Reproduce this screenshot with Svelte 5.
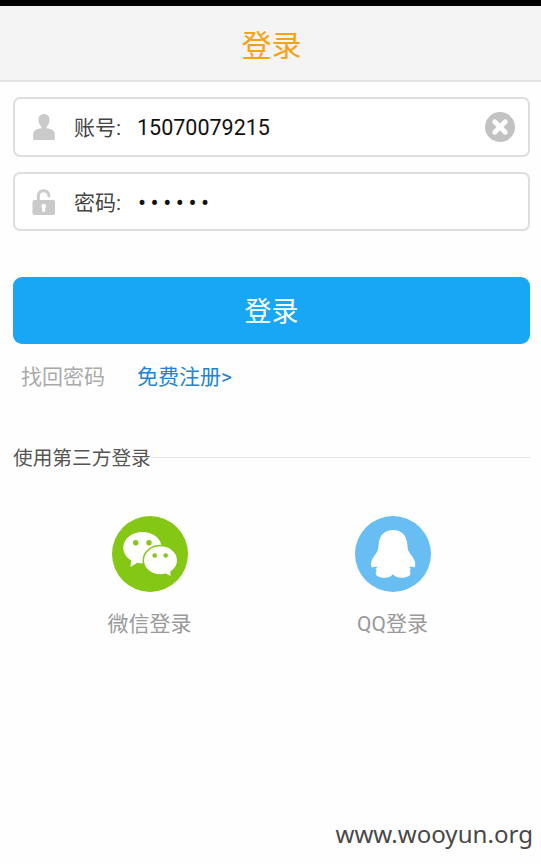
<script lang="ts">
	let account = '15070079215';
	let password = '123456';
</script>

<svelte:head><title>登录</title></svelte:head>

<div class="page">
	<header>
		<h1>登录</h1>
	</header>

	<form on:submit|preventDefault>
		<label class="field">
			<svg class="field-icon" viewBox="0 0 24 28" aria-hidden="true">
				<path d="M12 1c3.300 0 5.500 2.300 5.500 5.800 0 3-1.200 5.400-3 7v1.400c3.500.3 7.500 1.300 8.300 5.300V26a1 1 0 0 1-1 1H2.200a1 1 0 0 1-1-1v-5.500c.8-4 4.800-5 8.300-5.300v-1.400c-1.800-1.600-3-4-3-7C6.500 3.300 8.700 1 12 1z" />
			</svg>
			<span class="name">账号:</span>
			<input type="text" bind:value={account} />
			<button class="clear" type="button" aria-label="清除" on:click={() => (account = '')}>
				<svg viewBox="0 0 30 30">
					<circle cx="15" cy="15" r="15" />
					<path d="M9.700 9.700l10.600 10.600M20.300 9.700l-10.600 10.600" />
				</svg>
			</button>
		</label>

		<label class="field second">
			<svg class="field-icon" viewBox="0 0 24 28" aria-hidden="true">
				<path class="shackle" d="M6.300 13V8C6.300 1 16.600 1 16.900 7.800" />
				<path fill-rule="evenodd" d="M2.200 12h19.100A1.700 1.700 0 0 1 23 13.700v11.600a1.700 1.700 0 0 1-1.700 1.700H2.200a1.700 1.700 0 0 1-1.700-1.700V13.700A1.700 1.700 0 0 1 2.200 12zM11.700 15.700a2.500 2.500 0 0 0-1.500 4.400v3.700h3v-3.700A2.500 2.500 0 0 0 11.700 15.700z" />
			</svg>
			<span class="name">密码:</span>
			<input class="secret" type="password" bind:value={password} />
		</label>

		<button class="submit" type="submit">登录</button>
	</form>

	<nav>
		<a class="forgot" href="#forgot">找回密码</a>
		<a class="register" href="#register">免费注册&gt;</a>
	</nav>

	<div class="divider">
		<span>使用第三方登录</span>
	</div>

	<div class="providers">
		<a href="#wechat">
			<svg viewBox="0 0 76 76" aria-hidden="true">
				<circle cx="38" cy="38" r="38" fill="#84c714" />
				<path fill="#fff" d="M30.500 16C41 16 49.700 22.800 49.700 31.700S41 47.300 30.500 47.300c-1.800 0-3.600-.2-5.200-.6L18.500 51l.6-6.700C14.400 41.500 11.300 37 11.300 31.700 11.300 22.800 20 16 30.500 16z" />
				<path fill="#fff" stroke="#84c714" stroke-width="1.500" d="M48.500 29.600c9.400 0 17.200 6.300 17.200 14.800 0 4.600-2.700 8.800-6.600 11.500l.3 5.300-5.600-2.900c-1.700.5-3.400.8-5.300.8-9.400 0-17.200-6.300-17.200-14.700s7.800-14.800 17.200-14.800z" />
				<g fill="#84c714">
					<circle cx="23.700" cy="26.700" r="2.700" />
					<circle cx="37" cy="26.700" r="2.700" />
					<circle cx="42.700" cy="39.500" r="2.300" />
					<circle cx="53.700" cy="39.500" r="2.300" />
				</g>
			</svg>
			<span>微信登录</span>
		</a>
		<a href="#qq">
			<svg viewBox="0 0 76 76" aria-hidden="true">
				<circle cx="38" cy="38" r="38" fill="#68bef2" />
				<path fill="#fff" d="M38 14c8.500 0 13.600 5.500 14.300 14 .2 2.500.4 5 1.200 7 1.500 3.500 6.800 7.500 6.800 13 0 1.700-.5 3.500-1.400 3.500-.8 0-1.600-.6-2.500-1.200 0 1.500-.6 3-1.700 4.400.5.800.8 1.600.8 2.600 0 2.800-4 4.500-9 4.500-3.700 0-6.600-1.300-8.500-3.600-1.900 2.300-4.700 3.600-8.400 3.600-5 0-8.800-1.700-8.800-4.500 0-1 .3-1.800.8-2.600-1.100-1.400-1.700-2.900-1.700-4.400-.9.600-1.700 1.200-2.500 1.200-.9 0-1.400-1.800-1.400-3.500 0-5.500 5-9.500 6.500-13 .8-2 1-4.500 1.200-7C24.400 19.500 29.500 14 38 14z" />
				<path class="wing-gap" d="M18.800 52.500l3-1.200M57.700 52.500l-3-1.200" />
			</svg>
			<span>QQ登录</span>
		</a>
	</div>

	<footer>www.wooyun.org</footer>
</div>

<style>
	:global(body) {
		background: #fefefe;
	}

	.page {
		box-sizing: border-box;
		height: 864px;
		border-top: 6px solid #000;
		display: flex;
		flex-direction: column;
		overflow: hidden;
		font-family: Roboto, 'Noto Sans CJK SC', sans-serif;
		font-size: 21px;
		line-height: 30px;
	}

	header {
		box-sizing: border-box;
		height: 76px;
		flex-shrink: 0;
		display: flex;
		align-items: center;
		justify-content: center;
		background: #f4f4f4;
		border-bottom: 2px solid #e2e2e2;
	}

	h1 {
		margin: 0;
		padding: 5px 0 0 2px;
		font-size: 30px;
		font-weight: 400;
		line-height: 40px;
		color: #f4a316;
	}

	form {
		display: flex;
		flex-direction: column;
		padding: 15px 11px 0 13px;
	}

	.field {
		box-sizing: border-box;
		height: 60px;
		display: flex;
		align-items: center;
		padding: 0 13px 0 17px;
		border: 2px solid #dedede;
		border-radius: 7px;
		background: #fff;
	}

	.field.second {
		height: 59px;
		margin-top: 15px;
	}

	.field-icon {
		width: 24px;
		height: 28px;
		flex-shrink: 0;
		fill: #cacaca;
	}

	.shackle {
		fill: none;
		stroke: #cacaca;
		stroke-width: 3;
		stroke-linecap: round;
	}

	.name {
		width: 63px;
		margin-left: 18px;
		padding-top: 2px;
		color: #444;
		white-space: nowrap;
	}

	input {
		flex: 1;
		min-width: 0;
		padding: 2px 0 0;
		border: 0;
		outline: 0;
		background: none;
		font: inherit;
		font-size: 21.500px;
		color: #111;
	}

	.secret {
		padding-left: 1px;
		font-size: 24px;
		letter-spacing: 4.500px;
	}

	.clear {
		width: 30px;
		height: 30px;
		padding: 0;
		border: 0;
		background: none;
	}

	.clear svg {
		display: block;
		fill: #c2c2c2;
	}

	.clear path {
		stroke: #fff;
		stroke-width: 4.800;
		stroke-linecap: round;
	}

	.submit {
		height: 67px;
		margin-top: 46px;
		padding: 3px 0 0;
		border: 0;
		border-radius: 9px;
		background: #18a7f5;
		color: #fff;
		font: inherit;
		font-size: 27px;
	}

	nav {
		display: flex;
		gap: 32px;
		padding: 18px 21px 0;
	}

	a {
		text-decoration: none;
	}

	.forgot {
		color: #aaa;
	}

	.register {
		color: #2283d5;
	}

	.divider {
		display: flex;
		align-items: center;
		margin: 49px 11px 0 13px;
		font-size: 19.700px;
		color: #555;
	}

	.divider span {
		padding-top: 3px;
	}

	.divider::after {
		content: '';
		flex: 1;
		height: 1px;
		background: #e6e6e6;
	}

	.providers {
		display: grid;
		grid-template-columns: 1fr 1fr;
		padding: 42px 27px 0 28px;
	}

	.providers a {
		display: flex;
		flex-direction: column;
		align-items: center;
		gap: 17px;
		color: #999;
	}

	.providers svg {
		width: 76px;
		height: 76px;
	}

	.wing-gap {
		stroke: #68bef2;
		stroke-width: 1.500;
	}

	footer {
		margin: auto 8px 15px;
		text-align: right;
		font-family: 'Noto Sans', sans-serif;
		font-size: 24.100px;
		color: #484848;
	}
</style>
